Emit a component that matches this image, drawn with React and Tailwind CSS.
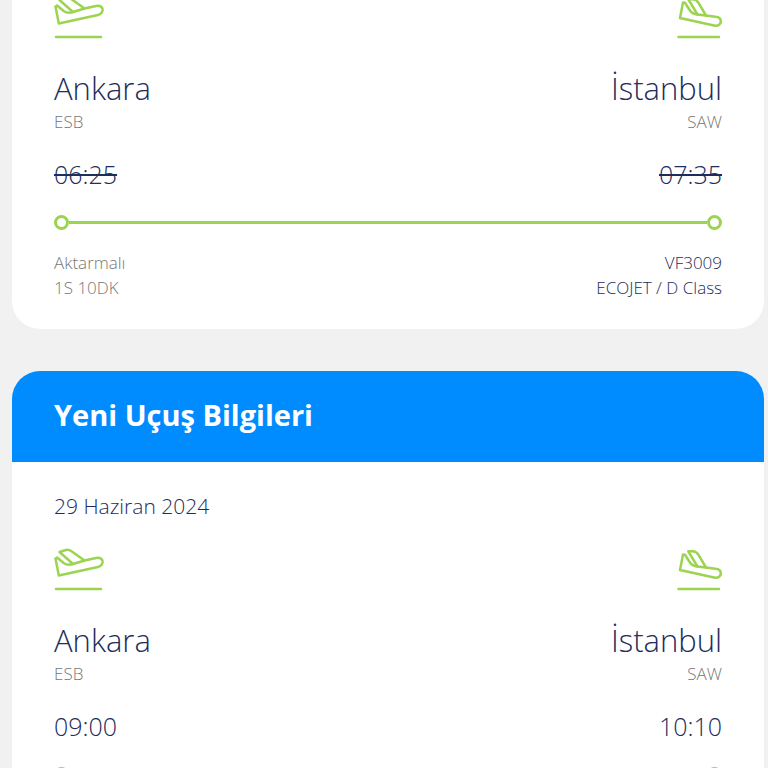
import { clsx } from 'clsx';

const oldFlight = {
  from: { city: 'Ankara', code: 'ESB', time: '06:25' },
  to: { city: 'İstanbul', code: 'SAW', time: '07:35' },
  stops: 'Aktarmalı',
  duration: '1S 10DK',
  number: 'VF3009',
  cabin: 'ECOJET / D Class',
};

const newFlight = {
  date: '29 Haziran 2024',
  from: { city: 'Ankara', code: 'ESB', time: '09:00' },
  to: { city: 'İstanbul', code: 'SAW', time: '10:10' },
};

function DepartureIcon() {
  return (
    <svg className="block h-11 w-[50px]" viewBox="0 0 50 44" fill="none" stroke="#9bd44f" strokeWidth="2.5" strokeLinecap="round" strokeLinejoin="round" aria-hidden="true">
      <path d="M30.500 12.5 L19 16 C15.500 17.200 12.500 17 10 15.200 L3 9.500 L1.500 10.500 L4.800 27.500 L44 19 C47.500 18 49.200 15.300 48.400 12.600 C47.500 10 45 9.500 42 10 Z" />
      <path d="M19 16 L5.500 4 L11 2.200 C13.500 1.500 15.500 1.800 17.500 3.200 L30.500 12.500" />
      <path d="M2 41 H47" />
    </svg>
  );
}

function ArrivalIcon() {
  return (
    <svg className="block h-11 w-[46px]" viewBox="0 0 46 44" fill="none" stroke="#9bd44f" strokeWidth="2.5" strokeLinecap="round" strokeLinejoin="round" aria-hidden="true">
      <path d="M30 19.500 L21.500 18.500 C17.500 18 15.500 17 14 14.500 L9 6.800 L7 6.500 L4 22 L38 29.500 C42 30.300 44.800 28.500 44.800 25.300 C44.800 22.500 42.500 21 39.500 20.700 Z" />
      <path d="M21.500 18.500 L12.300 3.300 L17 3.300 C19.500 3.500 21 4.600 22.500 6.800 L30 19.500" />
      <path d="M2.500 41 H43" />
    </svg>
  );
}

function Stop({ stop, cancelled, end, children }) {
  return (
    <div className={clsx('flex flex-col', end ? 'items-end' : 'items-start')}>
      {children}
      <h2 className="mt-7 text-[31px] leading-10 font-light text-[#1d2d5c]">{stop.city}</h2>
      <p className="text-[17px] leading-7 font-light text-[#777777]">{stop.code}</p>
      <time className={clsx('mt-5 text-[25px] leading-9 font-light text-[#1d2d5c]', cancelled && 'line-through')}>{stop.time}</time>
    </div>
  );
}

function Route({ flight, cancelled }) {
  return (
    <div className="px-[42px]">
      <div className="flex justify-between">
        <Stop stop={flight.from} cancelled={cancelled}><DepartureIcon /></Stop>
        <Stop stop={flight.to} cancelled={cancelled} end><ArrivalIcon /></Stop>
      </div>

      {/* Timeline */}
      <div className="mt-[23px] flex items-center">
        <span className="size-[15px] rounded-full border-3 border-[#9bd44f]" />
        <span className="h-[3px] flex-1 bg-[#9bd44f]" />
        <span className="size-[15px] rounded-full border-3 border-[#9bd44f]" />
      </div>

      {flight.number && (
        <div className="mt-5 flex justify-between pb-[29px] text-[17px] leading-[25px] font-light">
          <div className="text-[#777777]">
            <p>{flight.stops}</p>
            <p>{flight.duration}</p>
          </div>
          <div className="text-right text-[#1d2d5c]">
            <p>{flight.number}</p>
            <p>{flight.cabin}</p>
          </div>
        </div>
      )}
    </div>
  );
}

export default function App() {
  return (
    <div className="h-screen overflow-hidden bg-[#f1f1f1] pr-1 pl-3 font-['Open_Sans',sans-serif]">
      <main className="-mt-1 flex flex-col gap-[42px]">
        <section className="rounded-b-[28px] bg-white">
          <Route flight={oldFlight} cancelled />
        </section>

        <section className="overflow-hidden rounded-t-[28px] bg-white">
          <header className="bg-[#008cff] px-[42px] pt-6 pb-[27px]">
            <h1 className="text-[29px] leading-10 font-bold text-white">Yeni Uçuş Bilgileri</h1>
          </header>
          <p className="px-[42px] pt-[30px] pb-7 text-[21px] leading-7 font-light text-[#1d2d5c]">{newFlight.date}</p>
          <Route flight={newFlight} />
        </section>
      </main>
    </div>
  );
}
